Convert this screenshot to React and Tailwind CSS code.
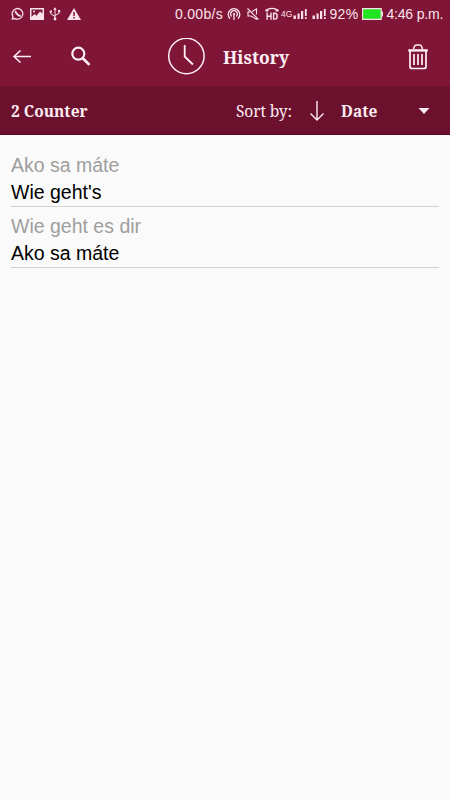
const entries = [
  { source: 'Ako sa máte', target: "Wie geht's" },
  { source: 'Wie geht es dir', target: 'Ako sa máte' },
]

const serif = 'font-["Noto_Serif","DejaVu_Serif_Condensed","DejaVu_Serif",serif] [font-stretch:condensed]'

function Signal() {
  return (
    <svg className="w-[15px] h-3 shrink-0" viewBox="0 0 15 12" fill="currentColor">
      <path d="M1.5 7.5h2.4V11H1.5zM5.5 5.5h2.1V11H5.5zM9 3h2.2v8H9zM12.9 1h1.8v7h-1.8zM12.9 9.2h1.8V11h-1.8z" />
    </svg>
  )
}

function StatusBar() {
  return (
    <div className='flex items-center h-7 pl-[11px] pr-1 font-["Liberation_Sans",sans-serif] text-[14px] text-[#fbe3ec]'>
      {/* Notifications */}
      <svg className="w-[14px] h-[14px] shrink-0" viewBox="0 0 14 14" fill="none" stroke="currentColor" strokeWidth="1.3">
        <path d="M1.3 12l.7-2.4A5.3 5.3 0 1 1 4.2 11.6z" />
        <path d="M4.8 4c-.8 1.4 2.8 5.4 4.9 4.6" strokeWidth="1.9" />
      </svg>
      <svg className="w-[14px] h-3 ml-[5px] shrink-0" viewBox="0 0 14 12">
        <path d="M0 0h14v12H0z" fill="currentColor" />
        <path d="M1.5 1.5h11v4L10 3.5 6.5 7.8 4.5 6l-3 3z" fill="#7d1535" />
        <circle cx="4" cy="3.5" r="1" fill="currentColor" />
      </svg>
      <svg className="w-[12px] h-[14px] ml-[5px] shrink-0" viewBox="0 0 12 14" fill="none" stroke="currentColor" strokeWidth="1">
        <path d="M6 1.5v10M1.8 5v1.8L6 9.5M10.2 4v2.2L6 8.5" />
        <path d="M4.3 2.8L6 .2l1.7 2.6zM.7 3.6h2.2v2H.7zM9 3h2.2v2H9z" fill="currentColor" stroke="none" />
        <circle cx="6" cy="12" r="1.4" fill="currentColor" stroke="none" />
      </svg>
      <svg className="w-[14px] h-3 ml-[6px] shrink-0" viewBox="0 0 14 12">
        <path d="M7 0l7 12H0z" fill="currentColor" />
        <path d="M6.3 4h1.5v4H6.3zM6.3 9h1.5v1.5H6.3z" fill="#7d1535" />
      </svg>

      {/* Connectivity */}
      <span className="ml-[94px] w-[50px] shrink-0 whitespace-nowrap tracking-[0.3px]">0.00b/s</span>
      <svg className="w-[14px] h-[14px] ml-[2px] shrink-0" viewBox="0 0 14 14" fill="none" stroke="currentColor" strokeWidth="1.3">
        <path d="M3 11.7A5.8 5.8 0 1 1 11 11.7M4.6 9.5a3.4 3.4 0 1 1 4.8 0M7 7v6" />
        <circle cx="7" cy="7" r="1.1" fill="currentColor" stroke="none" />
      </svg>
      <svg className="w-3 h-3 ml-[6px] shrink-0" viewBox="0 0 12 12" fill="none" stroke="currentColor" strokeWidth="1.1">
        <path d="M3 4H1v4h3l5.5 3.2V8.7M5 3.6L9.5 1v5.6M.5.5l11 11" />
      </svg>
      <svg className="w-[14px] h-[14px] ml-[6px] shrink-0" viewBox="0 0 14 14" fill="none" stroke="currentColor" strokeWidth="1.4">
        <path d="M1.2 3.4C4 .7 10 .7 12.8 3.4" />
        <path d="M.4 2.6h3v2h-3zM10.6 2.6h3v2h-3z" fill="currentColor" stroke="none" />
        <path d="M2.1 5.6v7.2M6 5.6v7.2M2 9.2h4M8.6 6.3v5.8h1.2c3.2 0 3.2-5.8 0-5.8z" />
      </svg>
      <span className="ml-[2px] w-[11px] shrink-0 text-[8.5px] leading-none">4G</span>
      <Signal />
      <span className="w-[3.5px] shrink-0" />
      <Signal />
      <span className="ml-[4px] w-[32px] shrink-0 whitespace-nowrap tracking-[0.3px]">92%</span>
      <svg className="w-[21px] h-3 shrink-0" viewBox="0 0 21 12">
        <path d="M.6.6h18.6v10.8H.6z" fill="#22e322" stroke="currentColor" strokeWidth="1.1" />
        <path d="M19.4 3.5H21v5h-1.6z" fill="currentColor" />
      </svg>
      <span className="ml-[4px] shrink-0 whitespace-nowrap tracking-[-0.2px]">4:46 p.m.</span>
    </div>
  )
}

function Header() {
  return (
    <div className="flex items-center h-[58px] pl-3 pr-[21px] text-[#fff0f5]">
      <svg className="w-5 h-5 shrink-0" viewBox="0 0 20 20" fill="none" stroke="currentColor" strokeWidth="1.5">
        <path d="M19 9.5H2M8.5 3.5L2 9.5l6.5 6" />
      </svg>
      <svg className="w-[22px] h-[22px] ml-[38px] shrink-0" viewBox="0 0 22 22" fill="none" stroke="currentColor">
        <circle cx="8.3" cy="7.7" r="6" strokeWidth="2.2" />
        <path d="M12.8 12.2l6.7 6.7" strokeWidth="2.7" />
      </svg>
      <svg className="w-[38px] h-[38px] ml-[75px] shrink-0" viewBox="0 0 38 38" fill="none" stroke="currentColor">
        <circle cx="19.4" cy="18" r="17.7" strokeWidth="1.5" />
        <path d="M17.7 7v11.5l8.2 8" strokeWidth="1.8" />
      </svg>
      <h1 className={`${serif} ml-[18px] text-[17.5px] font-bold`}>History</h1>
      <svg className="w-[22px] h-[26px] ml-auto shrink-0" viewBox="0 0 22 26" fill="none" stroke="currentColor">
        <path d="M6.5 5l1-2.8C7.8 1.4 8.5 1 9.4 1h3.2c.9 0 1.6.4 1.9 1.2l1 2.8" strokeWidth="1.5" />
        <path d="M1.3 6.4h19.4" strokeWidth="2.4" />
        <path d="M3 7v15.5c0 1.4.8 2 2 2h12c1.3 0 2-.6 2-2V7" strokeWidth="1.7" />
        <path d="M7 10v11M11 10v11M15 10v11" strokeWidth="1.7" />
      </svg>
    </div>
  )
}

function SortBar() {
  return (
    <div className={`${serif} flex items-center h-[49px] pl-[11px] pr-5 pt-[2px] bg-[#6b112e] border-b border-[#55082a] text-[15.5px] text-[#fdebf2] whitespace-nowrap`}>
      <span className="w-[225px] pt-[2px] font-bold">2 Counter</span>
      <span className="w-[72px] pt-[2px] tracking-[-0.1px]">Sort by:</span>
      <svg className="w-4 h-5 shrink-0" viewBox="0 0 16 20" fill="none" stroke="currentColor" strokeWidth="1.4">
        <path d="M9 0v19M2.5 12.5L9 19l6.5-6.5" />
      </svg>
      <span className="ml-[17px] pt-[2px] font-bold">Date</span>
      <svg className="w-3 h-[6px] ml-auto shrink-0" viewBox="0 0 12 6" fill="currentColor">
        <path d="M.5 0h11L6 6z" />
      </svg>
    </div>
  )
}

export default function App() {
  return (
    <div className="flex flex-col w-[450px] h-[800px] overflow-hidden bg-[#fafafa]">
      <div className="bg-[#801637]">
        <StatusBar />
        <Header />
      </div>
      <SortBar />
      <div className='px-[11px] pt-[11px] font-["Liberation_Sans",Arial,sans-serif] text-[19.5px] leading-[27px]'>
        {entries.map((entry, i) => (
          <div key={i} className="h-[61px] pt-[6px] border-b border-[#d2d2d2]">
            <p className="text-[#9e9e9e]">{entry.source}</p>
            <p className="text-black">{entry.target}</p>
          </div>
        ))}
      </div>
    </div>
  )
}
